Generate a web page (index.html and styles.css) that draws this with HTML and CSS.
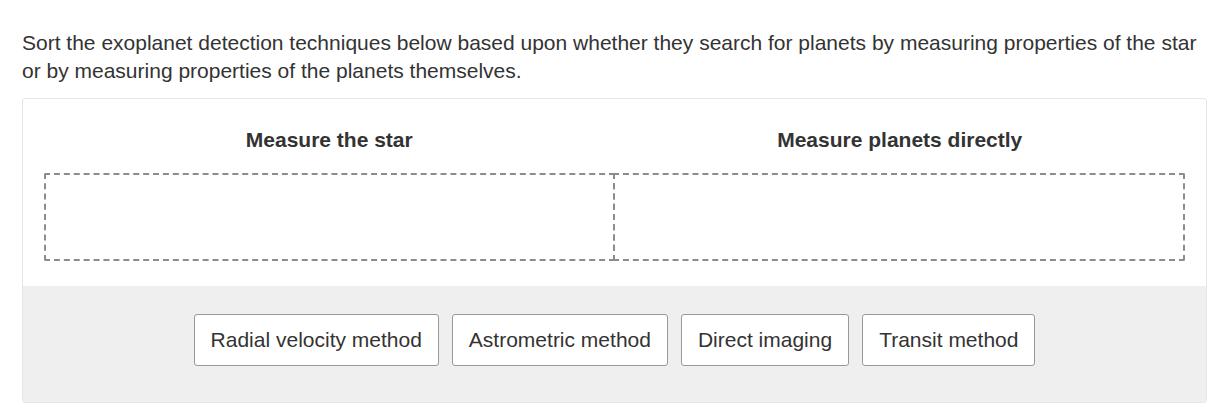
FILE: index.html
```html
<!DOCTYPE html>
<html lang="en">
<head>
    <meta charset="UTF-8">
    <title>Sort exoplanet detection techniques</title>
    <link rel="stylesheet" href="styles.css">
</head>
<body>
    <div class="question">
        <p class="prompt">Sort the exoplanet detection techniques below based upon whether they search for planets by measuring properties of the star or by measuring properties of the planets themselves.</p>

        <div class="sorter">
            <div class="bins">
                <div class="bin">
                    <h3>Measure the star</h3>
                    <div class="dropzone"></div>
                </div>
                <div class="bin">
                    <h3>Measure planets directly</h3>
                    <div class="dropzone"></div>
                </div>
            </div>

            <div class="tray">
                <button class="chip">Radial velocity method</button>
                <button class="chip">Astrometric method</button>
                <button class="chip">Direct imaging</button>
                <button class="chip">Transit method</button>
            </div>
        </div>
    </div>
</body>
</html>
```

FILE: styles.css
```css
body {
    margin: 0;
    font-family: "Liberation Sans", Arial, sans-serif;
    color: #333;
    background-color: #fff;
}

.question {
    padding: 29px 15px 0 22px;
}

.prompt {
    margin: 0 0 13px;
    font-size: 21px;
    line-height: 28px;
}

.sorter {
    border: 1px solid #e6e6e6;
    border-radius: 3px;
    overflow: hidden;
}

.bins {
    display: flex;
    padding: 29px 21px 25px;
}

.bin {
    flex: 1;
    display: flex;
    flex-direction: column;
}

.bin + .bin .dropzone {
    margin-left: -2px;
}

.bin h3 {
    margin: 0 0 21px;
    text-align: center;
    font-size: 21px;
    line-height: 24px;
    font-weight: bold;
    color: #333;
}

.dropzone {
    height: 84px;
    border: 2px dashed #8c8c8c;
    border-radius: 2px;
}

.tray {
    display: flex;
    justify-content: center;
    gap: 13px;
    padding: 28px 20px 36px;
    background-color: #efefef;
}

.chip {
    height: 52px;
    padding: 0 16px;
    font-family: "Liberation Sans", Arial, sans-serif;
    font-size: 21px;
    color: #333;
    background-color: #fff;
    border: 1px solid #999;
    border-radius: 3px;
    cursor: pointer;
}
```
